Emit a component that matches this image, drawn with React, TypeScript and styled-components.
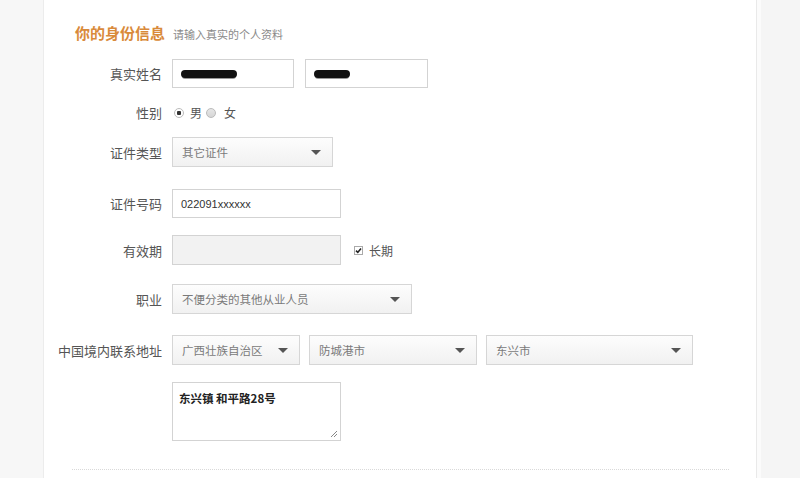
import React from 'react';
import styled, { createGlobalStyle } from 'styled-components';

const GlobalStyle = createGlobalStyle`
  html, body {
    margin: 0;
    padding: 0;
    background: #f6f6f6;
    font-family: "Noto Sans CJK SC", "Liberation Sans", sans-serif;
  }
`;

const Page = styled.div`
  display: flex;
  height: 478px;
  overflow: hidden;
`;

const Gutter = styled.div`
  width: 43px;
  flex-shrink: 0;
  background: #f7f7f7;
  border-right: 1px solid #ececec;
`;

const Panel = styled.div`
  width: 712px;
  flex-shrink: 0;
  background: #fff;
  padding-top: 22px;
  box-sizing: border-box;
`;

const SideBar = styled.div`
  flex: 1;
  background: #f5f5f5;
  border-left: 1px solid #e9e9e9;
  box-shadow: inset 4px 0 0 #fbfbfb;
`;

const Heading = styled.div`
  display: flex;
  align-items: baseline;
  gap: 8px;
  padding-left: 31px;
  height: 22px;
  line-height: 22px;
`;

const Title = styled.span`
  color: #d98a3a;
  font-size: 15px;
  font-weight: 700;
`;

const Subtitle = styled.span`
  color: #8a8a8a;
  font-size: 11px;
`;

const Row = styled.div<{ $top: number }>`
  display: grid;
  grid-template-columns: 118px 1fr;
  column-gap: 10px;
  align-items: center;
  margin-top: ${(p) => p.$top}px;
`;

const Label = styled.div`
  text-align: right;
  color: #555;
  font-size: 13px;
  white-space: nowrap;
`;

const Fields = styled.div<{ $gap?: number }>`
  display: flex;
  align-items: center;
  gap: ${(p) => p.$gap ?? 10}px;
`;

const Input = styled.div<{ $w: number; $h?: number; $disabled?: boolean }>`
  width: ${(p) => p.$w}px;
  height: ${(p) => p.$h ?? 29}px;
  box-sizing: border-box;
  border: 1px solid #d3d3d3;
  background: ${(p) => (p.$disabled ? '#f2f2f2' : '#fff')};
  display: flex;
  align-items: center;
  padding: 0 8px;
  font-family: "Liberation Sans", "Noto Sans CJK SC", sans-serif;
  font-size: 11px;
  color: #333;
`;

const Select = styled.div<{ $w: number }>`
  width: ${(p) => p.$w}px;
  height: 30px;
  box-sizing: border-box;
  border: 1px solid #d6d6d6;
  background: linear-gradient(#fdfdfd, #f1f1f1);
  display: flex;
  align-items: center;
  justify-content: space-between;
  padding: 0 11px 0 9px;
  font-size: 11.5px;
  color: #7a7a7a;
`;

const Caret = styled.span`
  width: 0;
  height: 0;
  border-left: 5px solid transparent;
  border-right: 5px solid transparent;
  border-top: 5px solid #555;
`;

// black marker strokes covering the names
const Blot = styled.span<{ $w: number }>`
  display: inline-block;
  width: ${(p) => p.$w}px;
  height: 8px;
  border-radius: 5px;
  background: #111;
  box-shadow: 0 2px 0 -1px #999;
`;

const Choice = styled.label`
  display: flex;
  align-items: center;
  gap: 6px;
  font-size: 12px;
  color: #555;
  margin-right: 4px;
`;

const Radio = styled.span<{ $on?: boolean }>`
  width: 10px;
  height: 10px;
  border-radius: 50%;
  box-sizing: border-box;
  border: 1px solid #bbb;
  background: ${(p) =>
    p.$on
      ? 'radial-gradient(circle, #333 0 2px, #fff 2.5px)'
      : 'linear-gradient(#e6e6e6, #d6d6d6)'};
`;

const Check = styled.span`
  width: 9px;
  height: 9px;
  box-sizing: border-box;
  border: 1px solid #aaa;
  background: #fff;
  display: flex;
  align-items: center;
  justify-content: center;
`;

const CheckLabel = styled(Choice)`
  margin-left: 3px;
  gap: 6px;
`;

const TextArea = styled.div`
  width: 169px;
  height: 59px;
  box-sizing: border-box;
  border: 1px solid #d3d3d3;
  background: #fff;
  padding: 7px 6px;
  font-size: 11.5px;
  font-weight: 700;
  color: #222;
  position: relative;
`;

const Grip = styled.svg`
  position: absolute;
  right: 2px;
  bottom: 2px;
`;

const Divider = styled.div`
  margin: 28px 27px 0 28px;
  border-top: 1px dotted #d9d9d9;
`;

const App: React.FC = () => {
  return (
    <>
      <GlobalStyle />
      <Page>
        <Gutter />
        <Panel>
          <Heading>
            <Title>你的身份信息</Title>
            <Subtitle>请输入真实的个人资料</Subtitle>
          </Heading>

          <Row $top={15}>
            <Label>真实姓名</Label>
            <Fields $gap={11}>
              <Input $w={122}>
                <Blot $w={56} />
              </Input>
              <Input $w={123}>
                <Blot $w={36} />
              </Input>
            </Fields>
          </Row>

          <Row $top={15}>
            <Label>性别</Label>
            <Fields $gap={0} style={{ paddingLeft: 2 }}>
              <Choice>
                <Radio $on />男
              </Choice>
              <Choice style={{ gap: 8 }}>
                <Radio />女
              </Choice>
            </Fields>
          </Row>

          <Row $top={15}>
            <Label>证件类型</Label>
            <Fields>
              <Select $w={161}>
                其它证件
                <Caret />
              </Select>
            </Fields>
          </Row>

          <Row $top={22}>
            <Label>证件号码</Label>
            <Fields>
              <Input $w={169}>022091xxxxxx</Input>
            </Fields>
          </Row>

          <Row $top={17}>
            <Label>有效期</Label>
            <Fields>
              <Input $w={169} $h={30} $disabled />
              <CheckLabel>
                <Check>
                  <svg width="7" height="7" viewBox="0 0 7 7">
                    <path d="M1 3.6 L2.8 5.4 L6 1.4" fill="none" stroke="#222" strokeWidth="1.6" />
                  </svg>
                </Check>
                长期
              </CheckLabel>
            </Fields>
          </Row>

          <Row $top={19}>
            <Label>职业</Label>
            <Fields>
              <Select $w={240}>
                不便分类的其他从业人员
                <Caret />
              </Select>
            </Fields>
          </Row>

          <Row $top={21}>
            <Label>中国境内联系地址</Label>
            <Fields $gap={9}>
              <Select $w={128}>
                广西壮族自治区
                <Caret />
              </Select>
              <Select $w={168}>
                防城港市
                <Caret />
              </Select>
              <Select $w={207}>
                东兴市
                <Caret />
              </Select>
            </Fields>
          </Row>

          <Row $top={17}>
            <div />
            <Fields>
              <TextArea>
                东兴镇 和平路28号
                <Grip width="8" height="8" viewBox="0 0 8 8">
                  <path d="M7 1 L1 7 M7 4 L4 7" stroke="#888" strokeWidth="1" />
                </Grip>
              </TextArea>
            </Fields>
          </Row>

          <Divider />
        </Panel>
        <SideBar />
      </Page>
    </>
  );
};

export default App;
